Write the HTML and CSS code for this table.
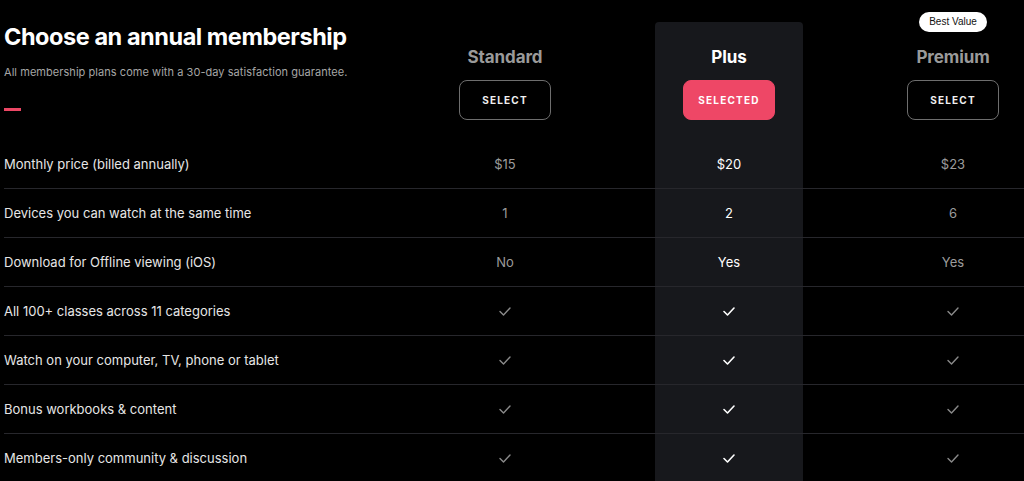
FILE: index.html
```html
<!DOCTYPE html>
<html>
<head>
<meta charset="utf-8">
<link rel="stylesheet" href="styles.css">
</head>
<body>
<div class="page">
  <div class="grid header">
    <div class="intro">
      <h1 class="title">Choose an annual membership</h1>
      <p class="subtitle">All membership plans come with a 30-day satisfaction guarantee.</p>
      <div class="accent"></div>
    </div>
    <div class="plan">
      <div class="plan-name">Standard</div>
      <button class="btn">SELECT</button>
    </div>
    <div class="plan plan-active">
      <div class="plan-name">Plus</div>
      <button class="btn btn-active">SELECTED</button>
    </div>
    <div class="plan plan-premium">
      <span class="badge">Best Value</span>
      <div class="plan-name">Premium</div>
      <button class="btn">SELECT</button>
    </div>
  </div>

  <div class="grid row">
    <div class="label">Monthly price (billed annually)</div>
    <div class="cell">$15</div>
    <div class="cell cell-active">$20</div>
    <div class="cell">$23</div>
  </div>
  <div class="grid row">
    <div class="label">Devices you can watch at the same time</div>
    <div class="cell">1</div>
    <div class="cell cell-active">2</div>
    <div class="cell">6</div>
  </div>
  <div class="grid row">
    <div class="label">Download for Offline viewing (iOS)</div>
    <div class="cell">No</div>
    <div class="cell cell-active">Yes</div>
    <div class="cell">Yes</div>
  </div>
  <div class="grid row">
    <div class="label">All 100+ classes across 11 categories</div>
    <div class="cell"><svg class="check" viewBox="0 0 12 9"><polyline points="1,4.5 4.5,8 11,1"/></svg></div>
    <div class="cell cell-active"><svg class="check" viewBox="0 0 12 9"><polyline points="1,4.5 4.5,8 11,1"/></svg></div>
    <div class="cell"><svg class="check" viewBox="0 0 12 9"><polyline points="1,4.5 4.5,8 11,1"/></svg></div>
  </div>
  <div class="grid row">
    <div class="label">Watch on your computer, TV, phone or tablet</div>
    <div class="cell"><svg class="check" viewBox="0 0 12 9"><polyline points="1,4.5 4.5,8 11,1"/></svg></div>
    <div class="cell cell-active"><svg class="check" viewBox="0 0 12 9"><polyline points="1,4.5 4.5,8 11,1"/></svg></div>
    <div class="cell"><svg class="check" viewBox="0 0 12 9"><polyline points="1,4.5 4.5,8 11,1"/></svg></div>
  </div>
  <div class="grid row">
    <div class="label">Bonus workbooks &amp; content</div>
    <div class="cell"><svg class="check" viewBox="0 0 12 9"><polyline points="1,4.5 4.5,8 11,1"/></svg></div>
    <div class="cell cell-active"><svg class="check" viewBox="0 0 12 9"><polyline points="1,4.5 4.5,8 11,1"/></svg></div>
    <div class="cell"><svg class="check" viewBox="0 0 12 9"><polyline points="1,4.5 4.5,8 11,1"/></svg></div>
  </div>
  <div class="grid row row-last">
    <div class="label">Members-only community &amp; discussion</div>
    <div class="cell"><svg class="check" viewBox="0 0 12 9"><polyline points="1,4.5 4.5,8 11,1"/></svg></div>
    <div class="cell cell-active"><svg class="check" viewBox="0 0 12 9"><polyline points="1,4.5 4.5,8 11,1"/></svg></div>
    <div class="cell"><svg class="check" viewBox="0 0 12 9"><polyline points="1,4.5 4.5,8 11,1"/></svg></div>
  </div>
</div>
</body>
</html>
```

FILE: styles.css
```css
html, body {
  margin: 0;
  padding: 0;
  background: #000;
  overflow: hidden;
}
body {
  font-family: Inter, "Noto Sans", "Liberation Sans", sans-serif;
  color: #e8e8e8;
  width: 1024px;
  height: 481px;
}
.page {
  padding-left: 4px;
}
.grid {
  display: grid;
  grid-template-columns: 351px 148px 148px 148px;
  column-gap: 76px;
}
.header {
  height: 140px;
}
.intro {
  padding-top: 22px;
}
.title {
  margin: 0;
  font-size: 23.5px;
  line-height: 30px;
  font-weight: 700;
  color: #fff;
  letter-spacing: -0.45px;
  white-space: nowrap;
}
.subtitle {
  margin: 12px 0 0;
  font-size: 11px;
  line-height: 16px;
  color: #a6a6a6;
  letter-spacing: 0.05px;
  white-space: nowrap;
}
.accent {
  margin-top: 28px;
  width: 17px;
  height: 3px;
  background: #ec4765;
}
.plan {
  margin-top: 22px;
  padding-top: 24px;
  display: flex;
  flex-direction: column;
  align-items: center;
  border-radius: 4px 4px 0 0;
  position: relative;
}
.plan-active {
  background: #17181c;
}
.plan-name {
  font-size: 17px;
  line-height: 22px;
  font-weight: 700;
  color: #9a9a9a;
  letter-spacing: -0.1px;
}
.plan-active .plan-name {
  color: #fff;
}
.btn {
  margin-top: 12px;
  width: 92px;
  height: 40px;
  border: 1px solid #6e6e6e;
  border-radius: 8px;
  background: transparent;
  color: #f0f0f0;
  font-family: Inter, "Noto Sans", sans-serif;
  font-size: 10px;
  font-weight: 700;
  letter-spacing: 1.2px;
  padding: 0;
}
.btn-active {
  background: #ee4766;
  border-color: #ee4766;
  color: #fff;
}
.badge {
  position: absolute;
  top: -10px;
  left: 50%;
  transform: translateX(-50%);
  width: 68px;
  height: 20px;
  line-height: 20px;
  border-radius: 10px;
  background: #fff;
  color: #111;
  font-family: "Liberation Sans", Arial, sans-serif;
  font-size: 10px;
  text-align: center;
  white-space: nowrap;
}
.row {
  height: 48px;
  border-bottom: 1px solid #27272c;
  width: 1020px;
}
.row-last {
  border-bottom: none;
  height: 60px;
}
.row-last > * {
  padding-bottom: 12px;
}
.label {
  display: flex;
  align-items: center;
  font-size: 13px;
  color: #e6e6e6;
  white-space: nowrap;
}
.cell {
  display: flex;
  align-items: center;
  justify-content: center;
  font-size: 13px;
  color: #9c9c9c;
}
.cell-active {
  background: #17181c;
  color: #fff;
}
.check {
  width: 12px;
  height: 9px;
  fill: none;
  stroke: #8a8a8a;
  stroke-width: 1.4;
  stroke-linecap: round;
  stroke-linejoin: round;
}
.cell-active .check {
  stroke: #fff;
  stroke-width: 1.6;
}
```
